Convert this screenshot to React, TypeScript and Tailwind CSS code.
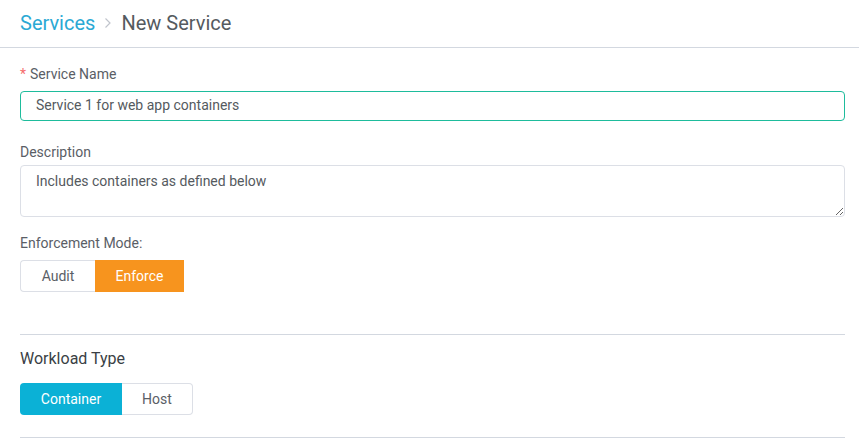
import React from "react";

export default function App() {
  return (
    <div className="w-[859px] h-[448px] bg-white overflow-hidden" style={{ fontFamily: "Roboto, 'Noto Sans', sans-serif" }}>
      <div className="h-[48px] border-b border-[#d3d8e0] flex items-center pl-5 pb-[1px]">
        <span className="text-[20px] text-[#2ba9d4] leading-none">Services</span>
        <svg className="mx-[9px]" width="8" height="12" viewBox="0 0 8 12">
          <path d="M1.5 1.5 L6 6 L1.5 10.5" fill="none" stroke="#c0c4cc" strokeWidth="1.2" />
        </svg>
        <span className="text-[20px] text-[#555a60] leading-none">New Service</span>
      </div>
      <div className="pl-5 pr-[14px]">
        <div className="pt-[16px] text-[14px] leading-[20px] text-[#5a5e66]">
          <span className="text-[#f56c6c] mr-[4px]">*</span>Service Name
        </div>
        <div className="mt-[7px] h-[30px] border border-[#1ebc9c] rounded-[4px] flex items-center pl-[15px] pb-[1px] text-[14px] text-[#555a60]">
          Service 1 for web app containers
        </div>
        <div className="mt-[21px] text-[14px] leading-[20px] text-[#5a5e66]">Description</div>
        <textarea
          className="mt-[3px] block w-full h-[52px] border border-[#dcdfe6] rounded-[4px] px-[15px] py-[5px] text-[14px] leading-[20px] text-[#555a60] outline-none resize-y"
          defaultValue="Includes containers as defined below"
        />
        <div className="mt-[16px] text-[14px] leading-[20px] text-[#5a5e66]">Enforcement Mode:</div>
        <div className="mt-[7px] flex">
          <div className="w-[75px] h-[32px] border border-[#dcdfe6] border-r-0 rounded-l-[4px] flex items-center justify-center text-[14px] text-[#5a5e66]">Audit</div>
          <div className="w-[89px] h-[32px] bg-[#f7941e] flex items-center justify-center text-[14px] text-white">Enforce</div>
        </div>
        <div className="mt-[42px] border-t border-[#d3d8e0]" />
        <div className="mt-[12px] text-[16px] leading-[24px] text-[#3a3f45]">Workload Type</div>
        <div className="mt-[12px] flex">
          <div className="w-[102px] h-[32px] bg-[#0bb1d6] rounded-l-[4px] flex items-center justify-center text-[14px] text-white">Container</div>
          <div className="w-[71px] h-[32px] border border-[#dcdfe6] border-l-0 rounded-r-[4px] flex items-center justify-center text-[14px] text-[#5a5e66]">Host</div>
        </div>
        <div className="mt-[22px] border-t border-[#d3d8e0]" />
      </div>
    </div>
  );
}
